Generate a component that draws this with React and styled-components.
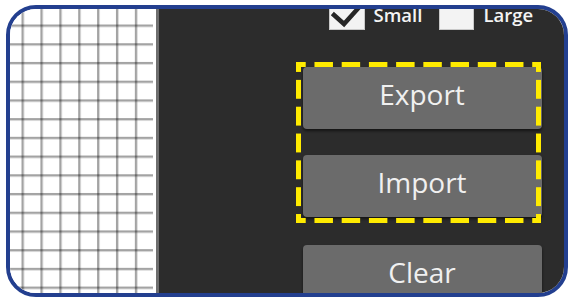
import React from "react";
import styled, { createGlobalStyle } from "styled-components";

const GlobalStyle = createGlobalStyle`
  html, body {
    margin: 0;
    padding: 0;
    background: #ffffff;
  }
  body {
    font-family: "Open Sans", "Noto Sans", sans-serif;
  }
`;

const Frame = styled.div`
  box-sizing: border-box;
  width: 562px;
  height: 292px;
  margin: 5px 0 0 6px;
  border: 4px solid #233f8f;
  border-radius: 30px;
  overflow: hidden;
  display: flex;
`;

const GridPanel = styled.div`
  box-sizing: border-box;
  width: 149px;
  flex-shrink: 0;
  padding-right: 3px;
  border-right: 3px solid #6e6e6e;
  background:
    linear-gradient(to right, rgba(0, 0, 0, 0.36) 0 1.5px, rgba(0, 0, 0, 0.14) 1.5px 2.6px, transparent 2.6px) 11.5px 0 / 18.9px 100% repeat-x content-box,
    linear-gradient(to bottom, rgba(0, 0, 0, 0.36) 0 1.5px, rgba(0, 0, 0, 0.14) 1.5px 2.6px, transparent 2.6px) 0 15.5px / 100% 18.72px repeat-y content-box,
    #ffffff;
`;

const Panel = styled.div`
  flex: 1;
  background: #2c2c2c;
  display: flex;
  flex-direction: column;
  align-items: flex-start;
  padding-left: 136.5px;
`;

const OptionRow = styled.div`
  display: flex;
  align-items: flex-end;
  margin: -14px 0 0 33px;
  height: 35px;
`;

const Option = styled.label`
  display: flex;
  align-items: flex-end;
  margin-right: ${(p) => p.$gap || 0}px;
`;

const Box = styled.span`
  position: relative;
  box-sizing: border-box;
  width: ${(p) => p.$w || 36}px;
  height: 35px;
  background: #f3f3f3;
  border: 1px solid #c9c9c9;
  display: block;
`;

const Tick = styled.svg`
  position: absolute;
  left: 1px;
  bottom: 2px;
  overflow: visible;
`;

const OptionText = styled.span`
  margin-left: 9px;
  font-size: 18.5px;
  font-weight: 600;
  line-height: 18px;
  color: #f4f4f4;
  padding-bottom: 6px;
`;

const Highlight = styled.div`
  position: relative;
  box-sizing: border-box;
  width: 245px;
  margin-top: 32px;
  padding: 5px 0 6px 7px;
  display: flex;
  flex-direction: column;
  gap: 26px;

  &::after {
    content: "";
    position: absolute;
    inset: 0;
    pointer-events: none;
    background:
      linear-gradient(90deg, #ffeb00 0 10px, transparent 10px 18px, #ffeb00 18px 28px) top left / 28px 5px,
      linear-gradient(90deg, #ffeb00 0 10px, transparent 10px 18px, #ffeb00 18px 28px) bottom left / 28px 5px,
      linear-gradient(180deg, #ffeb00 0 10px, transparent 10px 18px, #ffeb00 18px 28px) top left / 5px 28px,
      linear-gradient(180deg, #ffeb00 0 10px, transparent 10px 18px, #ffeb00 18px 28px) top right / 5px 28px;
    background-repeat: round no-repeat, round no-repeat, no-repeat round, no-repeat round;
  }
`;

const Button = styled.button`
  box-sizing: border-box;
  width: 239px;
  height: 62px;
  flex-shrink: 0;
  margin: ${(p) => p.$top || 0}px 0 0 ${(p) => p.$left || 0}px;
  border: none;
  border-radius: 4px;
  background: #6b6b6b;
  box-shadow: 0 2px 3px rgba(0, 0, 0, 0.55);
  color: #f0f0f0;
  font-family: "Open Sans", "Noto Sans", sans-serif;
  font-size: 28px;
  line-height: 1;
  padding: 0 0 9px;
  text-align: center;
`;

export default function App() {
  return (
    <>
      <GlobalStyle />
      <Frame>
        <GridPanel />
        <Panel>
          <OptionRow>
            <Option $gap={17}>
              <Box>
                <Tick width="34" height="26" viewBox="0 0 34 26">
                  <path
                    d="M3 14 L13 23 L31 3"
                    fill="none"
                    stroke="#262626"
                    strokeWidth="4.5"
                    strokeLinecap="square"
                  />
                </Tick>
              </Box>
              <OptionText>Small</OptionText>
            </Option>
            <Option>
              <Box $w={35} />
              <OptionText>Large</OptionText>
            </Option>
          </OptionRow>
          <Highlight>
            <Button>Export</Button>
            <Button>Import</Button>
          </Highlight>
          <Button $top={22} $left={7}>
            Clear
          </Button>
        </Panel>
      </Frame>
    </>
  );
}
